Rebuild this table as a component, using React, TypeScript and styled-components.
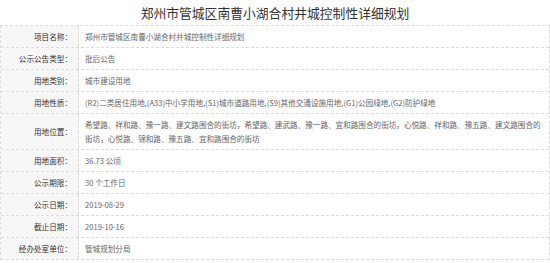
import styled, { createGlobalStyle } from "styled-components";

const GlobalStyle = createGlobalStyle`
  html, body {
    margin: 0;
    padding: 0;
    background: #fff;
  }
  body {
    font-family: "Noto Sans CJK SC", "Microsoft YaHei", sans-serif;
  }
`;

const Page = styled.div`
  width: 550px;
`;

const Title = styled.h1`
  margin: 0;
  height: 25px;
  line-height: 26px;
  font-size: 12.8px;
  font-weight: normal;
  color: #333;
  text-align: center;
`;

const Table = styled.div`
  border: 1px dashed #dcdcdc;
  border-bottom: none;
`;

const Row = styled.div`
  display: grid;
  grid-template-columns: 78px 1fr;
  border-bottom: 1px dashed #dcdcdc;
`;

const Label = styled.div`
  display: flex;
  align-items: center;
  justify-content: flex-end;
  padding-right: 6px;
  background: #f7f7f7;
  border-right: 1px dashed #dcdcdc;
  font-size: 7.6px;
  color: #333;
`;

const Value = styled.div`
  padding: 4px 6px 3px 6px;
  font-size: 7.6px;
  line-height: 14px;
  color: #666;
`;

interface Item {
  label: string;
  value: string;
}

const items: Item[] = [
  { label: "项目名称：", value: "郑州市管城区南曹小湖合村井城控制性详细规划" },
  { label: "公示公告类型：", value: "批后公告" },
  { label: "用地类别：", value: "城市建设用地" },
  {
    label: "用地性质：",
    value:
      "(R2)二类居住用地,(A33)中小学用地,(S1)城市道路用地,(S9)其他交通设施用地,(G1)公园绿地,(G2)防护绿地",
  },
  {
    label: "用地位置：",
    value:
      "希望路、祥和路、豫一路、建文路围合的街坊，希望路、建武路、豫一路、宜和路围合的街坊，心悦路、祥和路、豫五路、建文路围合的街坊，心悦路、锦和路、豫五路、宜和路围合的街坊",
  },
  { label: "用地面积：", value: "36.73 公顷" },
  { label: "公示期限：", value: "30 个工作日" },
  { label: "公示日期：", value: "2019-08-29" },
  { label: "截止日期：", value: "2019-10-16" },
  { label: "经办处室单位：", value: "管城规划分局" },
];

const App = () => {
  return (
    <Page>
      <GlobalStyle />
      <Title>郑州市管城区南曹小湖合村井城控制性详细规划</Title>
      <Table>
        {items.map((item) => (
          <Row key={item.label}>
            <Label>{item.label}</Label>
            <Value>{item.value}</Value>
          </Row>
        ))}
      </Table>
    </Page>
  );
};

export default App;
